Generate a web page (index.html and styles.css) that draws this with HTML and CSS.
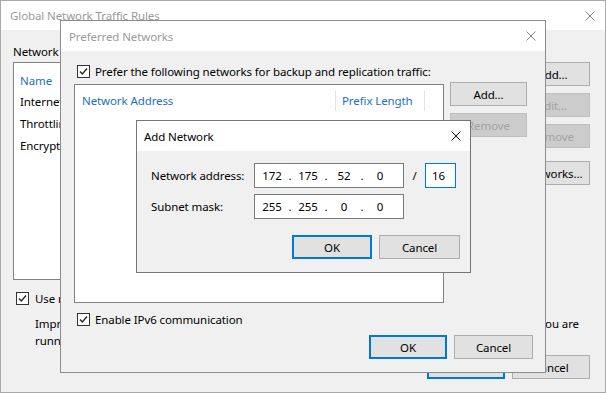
FILE: index.html
```html
<!DOCTYPE html>
<html>
<head>
<meta charset="utf-8">
<link rel="stylesheet" href="styles.css">
</head>
<body>
<div class="desktop">

  <div class="window win-global">
    <div class="titlebar">
      <span class="title">Global Network Traffic Rules</span>
      <svg class="close" width="10" height="10" viewBox="0 0 10 10"><path d="M0.5 0.5L9.5 9.5M9.5 0.5L0.5 9.5" stroke="#8a8a8a" stroke-width="1"/></svg>
    </div>
    <div class="gbody">
      <div class="glabel">Network traffic rules:</div>
      <div class="gmain">
        <div class="list glist">
          <div class="ghead">Name</div>
          <div class="grow">Internet</div>
          <div class="grow">Throttling</div>
          <div class="grow">Encryption</div>
        </div>
        <div class="btncol gbtns">
          <div class="btn">Add...</div>
          <div class="btn disabled">Edit...</div>
          <div class="btn disabled">Remove</div>
          <div class="btn gnet">Networks...</div>
        </div>
      </div>
      <div class="checkrow gcheck">
        <span class="check"><svg width="11" height="11" viewBox="0 0 11 11"><path d="M2 5.5L4.3 8L9 2.5" fill="none" stroke="#222" stroke-width="1.3"/></svg></span>
        <span>Use multiple</span>
      </div>
      <div class="gpara">
        <div class="pline"><span>Improves</span><span>you are</span></div>
        <div>running</div>
      </div>
      <div class="footer gfooter">
        <div class="btn default okg">OK</div>
        <div class="btn okg">Cancel</div>
      </div>
    </div>
  </div>

  <div class="window win-pref">
    <div class="titlebar">
      <span class="title">Preferred Networks</span>
      <svg class="close" width="10" height="10" viewBox="0 0 10 10"><path d="M0.5 0.5L9.5 9.5M9.5 0.5L0.5 9.5" stroke="#8a8a8a" stroke-width="1"/></svg>
    </div>
    <div class="pbody">
      <div class="checkrow">
        <span class="check"><svg width="11" height="11" viewBox="0 0 11 11"><path d="M2 5.5L4.3 8L9 2.5" fill="none" stroke="#222" stroke-width="1.3"/></svg></span>
        <span>Prefer the following networks for backup and replication traffic:</span>
      </div>
      <div class="pmain">
        <div class="list plist">
          <div class="phead">
            <div class="pcol1">Network Address</div>
            <div class="pcol2">Prefix Length</div>
          </div>
        </div>
        <div class="btncol pbtns">
          <div class="btn">Add...</div>
          <div class="btn disabled">Remove</div>
        </div>
      </div>
      <div class="checkrow ipv6">
        <span class="check"><svg width="11" height="11" viewBox="0 0 11 11"><path d="M2 5.5L4.3 8L9 2.5" fill="none" stroke="#222" stroke-width="1.3"/></svg></span>
        <span>Enable IPv6 communication</span>
      </div>
      <div class="footer pfooter">
        <div class="btn default okp">OK</div>
        <div class="btn cancelp">Cancel</div>
      </div>
    </div>
  </div>

  <div class="window win-add active">
    <div class="titlebar">
      <span class="title">Add Network</span>
      <svg class="close" width="10" height="10" viewBox="0 0 10 10"><path d="M0.5 0.5L9.5 9.5M9.5 0.5L0.5 9.5" stroke="#111" stroke-width="1"/></svg>
    </div>
    <div class="abody">
      <div class="arow">
        <span class="alabel">Network address:</span>
        <div class="ipfield">
          <span class="seg">172</span><span class="dot">.</span><span class="seg">175</span><span class="dot">.</span><span class="seg">52</span><span class="dot">.</span><span class="seg">0</span>
        </div>
        <span class="slash">/</span>
        <div class="prefix">16</div>
      </div>
      <div class="arow arow2">
        <span class="alabel">Subnet mask:</span>
        <div class="ipfield">
          <span class="seg">255</span><span class="dot">.</span><span class="seg">255</span><span class="dot">.</span><span class="seg">0</span><span class="dot">.</span><span class="seg">0</span>
        </div>
      </div>
      <div class="footer afooter">
        <div class="btn default oka">OK</div>
        <div class="btn cancela">Cancel</div>
      </div>
    </div>
  </div>

</div>
</body>
</html>
```

FILE: styles.css
```css
* { box-sizing: border-box; }
body {
  margin: 0;
  font-family: "Noto Sans", "Open Sans", sans-serif;
  font-size: 11.5px;
  letter-spacing: -0.1px;
  color: #000;
}
.desktop {
  position: relative;
  width: 606px;
  height: 393px;
  overflow: hidden;
  background: #f0f0f0;
}
.window {
  position: absolute;
  display: flex;
  flex-direction: column;
  background: #f0f0f0;
  border: 1px solid #999;
  overflow: hidden;
}
.win-global { left: 0; top: 0; width: 606px; height: 393px; border-color: #aaaaaa; }
.win-pref { left: 60px; top: 20px; width: 486px; height: 353px; border-color: #8c8c8c; }
.win-add { left: 136px; top: 120px; width: 335px; height: 153px; border-color: #757575; }

.titlebar {
  flex: none;
  height: 30px;
  background: #fff;
  display: flex;
  align-items: center;
  justify-content: space-between;
  padding: 0 9px 0 8px;
  white-space: nowrap;
}
.win-global .titlebar { height: 29px; padding: 0 10px 0 9px; }
.win-add .titlebar { padding-left: 7px; }
.title { color: #9a9a9a; }
.active .title { color: #000; }
.close { display: block; flex: none; }

.btn {
  flex: none;
  width: 77px;
  height: 24px;
  background: #e1e1e1;
  border: 1px solid #adadad;
  display: flex;
  align-items: center;
  justify-content: center;
  white-space: nowrap;
}
.btn.default { border: 2px solid #0078d7; }
.btn.disabled { background: #cccccc; border-color: #bfbfbf; color: #a3a3a3; }

.list { background: #fff; border: 1px solid #828282; }
.btncol { display: flex; flex-direction: column; gap: 7px; }

.checkrow {
  display: flex;
  align-items: center;
  height: 16px;
  padding-left: 3px;
  gap: 5px;
  white-space: nowrap;
}
.check {
  flex: none;
  width: 13px;
  height: 13px;
  border: 1px solid #333;
  background: #fff;
  display: flex;
  align-items: center;
  justify-content: center;
}
.check svg { display: block; }
.footer { display: flex; justify-content: flex-end; gap: 7px; }

/* Global window */
.gbody {
  flex: 1;
  display: flex;
  flex-direction: column;
  padding: 14px 15px 0 12px;
}
.glabel { line-height: 16px; height: 16px; white-space: nowrap; }
.gmain { display: flex; margin-top: 2px; gap: 10px; }
.glist { flex: 1; height: 218px; padding-left: 6px; }
.ghead { margin-top: 8px; height: 20px; line-height: 20px; color: #1e6fbf; }
.grow { height: 22px; line-height: 22px; white-space: nowrap; }
.gbtns { width: 75px; }
.gbtns .btn { width: 75px; }
.gnet { margin-top: 6px; }
.gcheck { margin-top: 10px; gap: 6px; }
.gpara { margin-top: 9px; padding-left: 22px; margin-right: 11px; line-height: 17px; white-space: nowrap; }
.pline { display: flex; justify-content: space-between; }
.gfooter { margin-top: 6px; }
.okg { width: 78px; }

/* Preferred window */
.pbody {
  flex: 1;
  display: flex;
  flex-direction: column;
  padding: 12px 12px 12px 13px;
}
.pmain { display: flex; margin-top: 5px; gap: 6px; }
.plist { width: 370px; height: 219px; }
.phead { display: flex; margin-top: 6px; height: 20px; line-height: 20px; color: #1e6fbf; white-space: nowrap; }
.pcol1 { width: 261px; padding-left: 7px; border-right: 1px solid #e3e3e3; }
.pcol2 { width: 89px; padding-left: 6px; border-right: 1px solid #e3e3e3; }
.pbtns { margin-top: -2px; }
.ipv6 { margin-top: 8px; }
.pfooter { margin-top: 8px; }
.okp { width: 78px; }
.cancelp { width: 79px; }

/* Add network window */
.abody {
  flex: 1;
  display: flex;
  flex-direction: column;
  padding: 12px 10px 12px 14px;
}
.arow { display: flex; align-items: center; height: 25px; }
.arow2 { margin-top: 6px; }
.alabel { width: 103px; flex: none; white-space: nowrap; }
.ipfield {
  width: 150px;
  height: 25px;
  border: 1px solid #7a7a7a;
  background: #fff;
  display: flex;
  align-items: center;
  padding-left: 2px;
}
.seg { width: 30px; text-align: center; }
.dot { width: 6px; text-align: center; }
.slash { width: 21px; text-align: center; }
.prefix {
  width: 31px;
  height: 25px;
  border: 1px solid #0078d7;
  background: #fff;
  display: flex;
  align-items: center;
  padding-left: 6px;
}
.afooter { margin-top: 16px; }
.oka { width: 80px; }
.cancela { width: 81px; }
```
